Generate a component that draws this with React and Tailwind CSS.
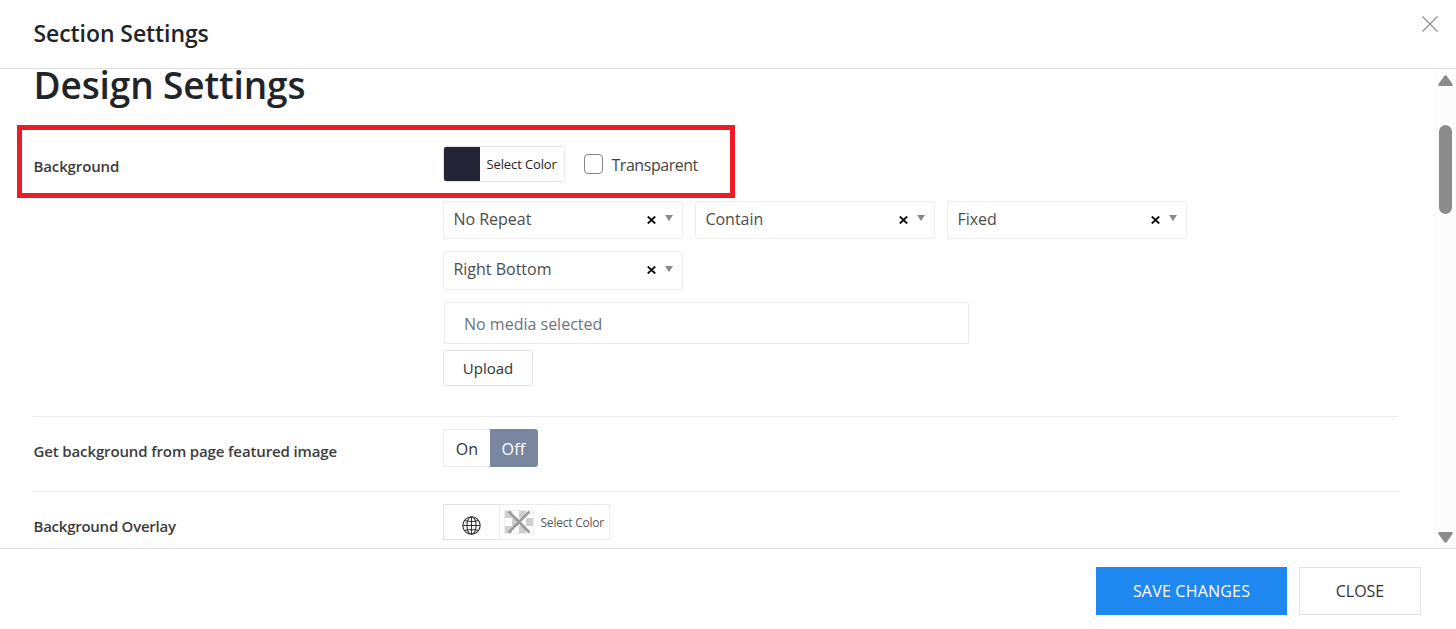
import React from "react";

function Label({ children, className = "" }) {
  return (
    <div className={`w-[410px] shrink-0 pl-[0.5px] text-[15px] leading-5 font-semibold tracking-[-0.13px] text-[#3c3c3c] ${className}`}>
      <span className="whitespace-nowrap">{children}</span>
    </div>
  );
}

function Select({ value, className = "h-[38px]", arrowClass = "mb-1" }) {
  return (
    <div className={`flex w-60 items-center rounded-[3px] border border-[#ebebeb] px-[9px] ${className}`}>
      <span className="mb-0.5 flex-1 pl-[0.4px] text-base leading-6 whitespace-nowrap text-[#4c4c4c]">{value}</span>
      <svg className="mr-[9px] h-[8px] w-[9px]" viewBox="0 0 9 8" fill="none" stroke="#111" strokeWidth="1.9">
        <path d="M0.8 0.5 8.2 7.5M8.2 0.5 0.8 7.5" />
      </svg>
      <svg className={`h-[6px] w-2 ${arrowClass}`} viewBox="0 0 8 6" fill="#888">
        <path d="M0 0h8L4 6z" />
      </svg>
    </div>
  );
}

function Globe() {
  return (
    <svg className="mt-1.5 h-[19px] w-[19px]" viewBox="0 0 19 19" fill="none" stroke="#333" strokeWidth="1.1">
      <circle cx="9.5" cy="9.5" r="8.7" />
      <ellipse cx="9.5" cy="9.5" rx="4.6" ry="8.7" />
      <path d="M9.5 .8v17.4M.8 9.500h17.4M2.500 4.500Q9.500 6.500 16.500 4.500M2.500 14.500Q9.500 12.500 16.500 14.500" />
    </svg>
  );
}

function Checker() {
  return (
    <svg className="h-6 w-[30px]" viewBox="0 0 30 24">
      <rect width="30" height="24" fill="#ececec" />
      <path fill="#fff" d="M1 8h7v8H1zM8 1h7v7H8zM22 1h7v7h-7zM15 8h7v8h-7zM8 16h7v7H8zM22 16h7v7h-7z" />
      <path fill="#cfcfcf" d="M1 1h7v7H1zM15 1h7v7h-7zM8 8h7v8H8zM22 8h7v8h-7zM1 16h7v7H1zM15 16h7v7h-7z" />
      <path d="M4.500 1.500 25.500 22.500M25.500 1.500 4.500 22.500" stroke="#999" strokeWidth="2.600" fill="none" />
    </svg>
  );
}

export default function App() {
  return (
    <div className="flex h-[629px] w-[1456px] flex-col overflow-hidden bg-white font-['Open_Sans','Noto_Sans',sans-serif]">
      <header className="flex h-[69px] shrink-0 items-center justify-between border-b border-[#dedede] pr-[18px] pl-[33.5px]">
        <h1 className="mb-0.5 text-[23px] leading-8 font-semibold tracking-[-0.08px] whitespace-nowrap text-[#212529]">Section Settings</h1>
        <svg className="mb-5 h-4 w-4" viewBox="0 0 16 16" fill="none" stroke="#8a8a8a" strokeWidth="1.1">
          <path d="M.5.5l15 15M15.500.5l-15 15" />
        </svg>
      </header>

      <div className="flex h-[479px] shrink-0">
        <main className="relative w-[1434px] shrink-0 pr-9 pl-[33px]">
          <h2 className="h-[66px] pl-[0.5px] text-[37px] leading-[31px] font-semibold tracking-[-0.12px] whitespace-nowrap text-[#212529]">Design Settings</h2>

          <section className="flex h-[282px] border-b border-[#ececec] pt-[11px]">
            <Label className="pt-2.5">Background</Label>
            <div className="flex w-[756px] flex-col">
              <div className="flex h-9 items-center">
                <div className="flex h-9 w-[122px] items-center overflow-hidden rounded-[3px] border border-[#e6e6e6]">
                  <div className="h-[34px] w-9 shrink-0 bg-[#232536]" />
                  <span className="pl-[6.5px] text-[13px] leading-5 tracking-[-0.12px] whitespace-nowrap text-[#222]">Select Color</span>
                </div>
                <div className="ml-[19px] h-5 w-[19px] rounded-[4px] border border-[#858585]" />
                <span className="mt-0.5 ml-[8.5px] text-base leading-6 tracking-[-0.46px] whitespace-nowrap text-[#444]">Transparent</span>
              </div>
              <div className="mt-[19px] flex flex-wrap gap-3">
                <Select value="No Repeat" />
                <Select value="Contain" />
                <Select value="Fixed" />
                <Select value="Right Bottom" className="h-[39px] pb-px" arrowClass="mb-0.5" />
              </div>
              <div className="mt-3 ml-px flex h-[42px] w-[525px] items-center rounded-[2px] border border-[#ebebeb] pt-0.5 pl-[19px]">
                <span className="text-base leading-6 whitespace-nowrap text-[#6c757d]">No media selected</span>
              </div>
              <button className="mt-1.5 flex h-9 w-[90px] items-center justify-center rounded-[3px] border border-[#e2e2e2] pb-px text-[15px] leading-6 text-[#333]">
                Upload
              </button>
            </div>
          </section>

          <section className="flex h-[75px] border-b border-[#ececec] pt-3">
            <Label className="pt-3">Get background from page featured image</Label>
            <div className="flex h-[38px] text-base leading-6">
              <div className="flex w-[47px] items-center justify-center rounded-l-[3px] border border-r-0 border-[#ebebeb] pt-0.5 text-[#333]">On</div>
              <div className="flex w-12 items-center justify-center rounded-r-[3px] bg-[#7986a0] pt-0.5 pr-px tracking-[0.2px] text-white">Off</div>
            </div>
          </section>

          <section className="flex pt-3">
            <Label className="pt-3 tracking-[-0.25px]">Background Overlay</Label>
            <div className="flex h-9">
              <div className="flex w-14 items-center justify-center border border-r-0 border-[#e2e2e2]">
                <Globe />
              </div>
              <div className="flex w-[111px] items-center border border-[#ebebeb] pl-1">
                <Checker />
                <span className="mt-0.5 ml-[6.5px] text-xs leading-5 tracking-[-0.22px] whitespace-nowrap text-[#555]">Select Color</span>
              </div>
            </div>
          </section>

          <div className="absolute top-14 left-[17px] h-[73px] w-[718px] border-[5px] border-[#ed1c24]" />
        </main>

        <aside className="flex w-[22px] shrink-0 flex-col items-center bg-[#fcfcfc] pt-1.5 pb-1">
          <svg className="ml-px h-[11px] w-[15px]" viewBox="0 0 15 11" fill="#8b8b8b">
            <path d="M6.200 1.100Q7.500-.5 8.800 1.100L14.300 8.700Q15.500 11 13.500 11H1.500Q-.5 11 .7 8.700z" />
          </svg>
          <div className="mt-[39px] ml-px h-[89px] w-[13px] rounded-full bg-[#8b8b8b]" />
          <svg className="mt-auto mb-[1.5px] ml-px h-[11px] w-[15px]" viewBox="0 0 15 11" fill="#8b8b8b">
            <path d="M6.200 9.900Q7.500 11.500 8.800 9.900L14.300 2.300Q15.500 0 13.500 0H1.500Q-.5 0 .7 2.300z" />
          </svg>
        </aside>
      </div>

      <footer className="flex h-[81px] shrink-0 items-start justify-end gap-3 border-t border-[#dedede] pt-[18px] pr-[35px] text-base leading-6">
        <button className="h-12 w-[191px] bg-[#1f87f0] tracking-[0.2px] whitespace-nowrap text-white">SAVE CHANGES</button>
        <button className="h-12 w-[122px] border border-[#e2e2e2] whitespace-nowrap text-[#333]">CLOSE</button>
      </footer>
    </div>
  );
}
